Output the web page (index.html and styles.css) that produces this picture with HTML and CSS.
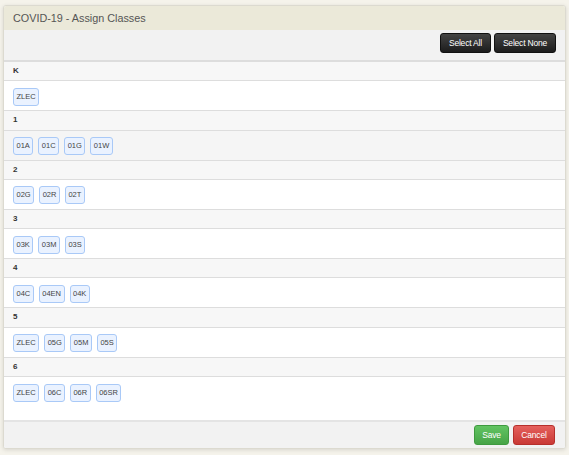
FILE: index.html
```html
<!DOCTYPE html>
<html lang="en">
<head>
    <meta charset="UTF-8">
    <title>COVID-19 - Assign Classes</title>
    <link rel="stylesheet" href="styles.css">
</head>
<body>
    <div class="modal">
        <div class="modal-header">COVID-19 - Assign Classes</div>
        <div class="toolbar">
            <button class="btn btn-dark">Select All</button>
            <button class="btn btn-dark">Select None</button>
        </div>
        <div class="modal-body">
            <div class="grade">K</div>
            <div class="classes">
                <span class="tag">ZLEC</span>
            </div>

            <div class="grade">1</div>
            <div class="classes hover">
                <span class="tag">01A</span>
                <span class="tag">01C</span>
                <span class="tag">01G</span>
                <span class="tag">01W</span>
            </div>

            <div class="grade">2</div>
            <div class="classes">
                <span class="tag">02G</span>
                <span class="tag">02R</span>
                <span class="tag">02T</span>
            </div>

            <div class="grade">3</div>
            <div class="classes">
                <span class="tag">03K</span>
                <span class="tag">03M</span>
                <span class="tag">03S</span>
            </div>

            <div class="grade">4</div>
            <div class="classes">
                <span class="tag">04C</span>
                <span class="tag">04EN</span>
                <span class="tag">04K</span>
            </div>

            <div class="grade">5</div>
            <div class="classes">
                <span class="tag">ZLEC</span>
                <span class="tag">05G</span>
                <span class="tag">05M</span>
                <span class="tag">05S</span>
            </div>

            <div class="grade">6</div>
            <div class="classes last">
                <span class="tag">ZLEC</span>
                <span class="tag">06C</span>
                <span class="tag">06R</span>
                <span class="tag">06SR</span>
            </div>
        </div>
        <div class="modal-footer">
            <button class="btn btn-save">Save</button>
            <button class="btn btn-cancel">Cancel</button>
        </div>
    </div>
</body>
</html>
```

FILE: styles.css
```css
body {
    font-family: "Liberation Sans", Arial, sans-serif;
    background-color: #f5f3eb;
    margin: 0;
    padding: 5px 3px 8px 3px;
    color: #333;
}
.modal {
    background-color: #fff;
    border: 1px solid #dcdad0;
    border-radius: 3px;
    box-shadow: 0 1px 4px rgba(0,0,0,0.12);
    overflow: hidden;
}
.modal-header {
    background-color: #ebe9d9;
    color: #555;
    font-size: 10.8px;
    height: 24px;
    line-height: 25px;
    padding: 0 9px;
}
.toolbar {
    background-color: #f2f2f2;
    border-bottom: 2px solid #ddd;
    display: flex;
    justify-content: flex-end;
    gap: 3px;
    padding: 3px 9px 7px;
}
.btn {
    font-family: "Liberation Sans", Arial, sans-serif;
    font-size: 8.5px;
    color: #fff;
    height: 20px;
    padding: 0 8px;
    border-radius: 3px;
    border: 1px solid #111;
    letter-spacing: -0.2px;
}
.btn-dark {
    background: linear-gradient(#444, #1c1c1c);
}
.btn-save {
    background: linear-gradient(#62c462, #47a447);
    border-color: #3f9a3f;
    width: 35px;
    padding: 0;
}
.btn-cancel {
    background: linear-gradient(#e5605c, #c93935);
    border-color: #b52f2b;
    width: 42px;
    padding: 0;
}
.grade {
    background-color: #f7f7f7;
    border-bottom: 1px solid #ddd;
    font-size: 8px;
    font-weight: bold;
    height: 18.3px;
    line-height: 18.3px;
    padding: 0 9px;
}
.classes {
    border-bottom: 1px solid #ddd;
    display: flex;
    gap: 5px;
    padding: 6.5px 9px 4.5px;
}
.classes.hover {
    background-color: #f5f5f5;
}
.classes.last {
    padding-bottom: 18.5px;
    border-bottom: 2px solid #e4e4e4;
}
.tag {
    background-color: #eaf2ff;
    border: 1px solid #a9c9f7;
    border-radius: 3px;
    font-size: 7.5px;
    color: #444;
    height: 16px;
    line-height: 16px;
    padding: 0 2.5px;
}
.modal-footer {
    background-color: #f2f2f2;
    display: flex;
    justify-content: flex-end;
    gap: 4px;
    padding: 3px 10px 3px;
}
```
